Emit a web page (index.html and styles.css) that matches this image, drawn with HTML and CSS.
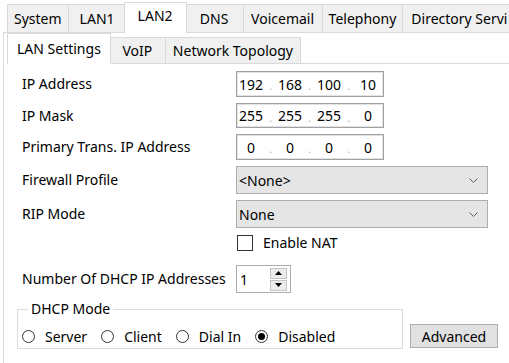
FILE: index.html
```html
<!DOCTYPE html>
<html lang="en">
<head>
    <meta charset="UTF-8">
    <title>LAN2 – LAN Settings</title>
    <link rel="stylesheet" href="styles.css">
</head>
<body>
    <div class="tabctl">
        <div class="tabstrip">
            <div class="tab">System</div>
            <div class="tab">LAN1</div>
            <div class="tab active">LAN2</div>
            <div class="tab">DNS</div>
            <div class="tab wide">Voicemail</div>
            <div class="tab wide">Telephony</div>
            <div class="tab">Directory Servi</div>
        </div>

        <div class="page">
            <div class="tabstrip sub">
                <div class="tab active">LAN Settings</div>
                <div class="tab">VoIP</div>
                <div class="tab">Network Topology</div>
            </div>

            <div class="subpage">
                <div class="form">
                    <label class="lbl">IP Address</label>
                    <div class="ipbox">
                        <span class="oct">192</span><span class="dot">.</span>
                        <span class="oct">168</span><span class="dot">.</span>
                        <span class="oct">100</span><span class="dot">.</span>
                        <span class="oct">10</span>
                    </div>

                    <label class="lbl">IP Mask</label>
                    <div class="ipbox">
                        <span class="oct">255</span><span class="dot">.</span>
                        <span class="oct">255</span><span class="dot">.</span>
                        <span class="oct">255</span><span class="dot">.</span>
                        <span class="oct">0</span>
                    </div>

                    <label class="lbl">Primary Trans. IP Address</label>
                    <div class="ipbox">
                        <span class="oct">0</span><span class="dot">.</span>
                        <span class="oct">0</span><span class="dot">.</span>
                        <span class="oct">0</span><span class="dot">.</span>
                        <span class="oct">0</span>
                    </div>

                    <label class="lbl">Firewall Profile</label>
                    <div class="combo">
                        <span>&lt;None&gt;</span>
                        <svg class="chev" width="9" height="5" viewBox="0 0 9 5"><polyline points="0.5,0.5 4.5,4.5 8.5,0.5" fill="none" stroke="#606060" stroke-width="1"/></svg>
                    </div>

                    <label class="lbl">RIP Mode</label>
                    <div class="combo">
                        <span>None</span>
                        <svg class="chev" width="9" height="5" viewBox="0 0 9 5"><polyline points="0.5,0.5 4.5,4.5 8.5,0.5" fill="none" stroke="#606060" stroke-width="1"/></svg>
                    </div>

                    <span class="lbl"></span>
                    <div class="check">
                        <span class="box"></span>
                        <span>Enable NAT</span>
                    </div>

                    <label class="lbl">Number Of DHCP IP Addresses</label>
                    <div class="spin">
                        <span class="spin-val">1</span>
                        <div class="spin-btns">
                            <span class="spin-btn"><svg width="7" height="4" viewBox="0 0 7 4"><polygon points="0,4 3.5,0 7,4" fill="#000"/></svg></span>
                            <span class="spin-btn"><svg width="7" height="4" viewBox="0 0 7 4"><polygon points="0,0 3.5,4 7,0" fill="#000"/></svg></span>
                        </div>
                    </div>
                </div>

                <div class="dhcp-row">
                    <fieldset class="group">
                        <legend>DHCP Mode</legend>
                        <div class="radios">
                            <span class="opt"><span class="radio"></span>Server</span>
                            <span class="opt"><span class="radio"></span>Client</span>
                            <span class="opt"><span class="radio"></span>Dial In</span>
                            <span class="opt"><span class="radio on"></span>Disabled</span>
                        </div>
                    </fieldset>
                    <button class="btn">Advanced</button>
                </div>
            </div>
        </div>
    </div>
</body>
</html>
```

FILE: styles.css
```css
* {
    margin: 0;
    padding: 0;
    box-sizing: border-box;
}

body {
    font-family: "Noto Sans", "Open Sans", sans-serif;
    font-size: 14px;
    color: #000;
    background: #fff;
    width: 509px;
    height: 363px;
    overflow: hidden;
    white-space: nowrap;
}

/* ---- tab controls ---- */

.tabctl {
    margin-left: 3px;
    width: 506px;
}

.tabstrip {
    display: flex;
    align-items: flex-end;
    height: 32px;
    padding-left: 4px;
}

.tab {
    height: 28px;
    line-height: 27px;
    min-width: 59px;
    padding: 0 6px;
    text-align: center;
    background: #f0f0f0;
    border: 1px solid #d9d9d9;
    border-bottom: none;
    margin-right: -1px;
}

.tab.wide {
    min-width: 80px;
}

.tab:last-child {
    flex: 1;
    text-align: left;
    padding-left: 8px;
    border-right: none;
}

.tab.active {
    position: relative;
    z-index: 1;
    height: 31px;
    line-height: 26px;
    min-width: 63px;
    margin: 0 -2px -1px -2px;
    padding: 0 8px;
    background: #fff;
}

.page {
    border-top: 1px solid #d9d9d9;
    border-left: 1px solid #d9d9d9;
    padding-left: 3px;
    height: 340px;
}

.tabstrip.sub {
    height: 30px;
    padding-left: 2px;
}

.tabstrip.sub .tab {
    flex: none;
    height: 26px;
    line-height: 25px;
    min-width: 57px;
    padding: 0 7px;
    text-align: center;
    border-right: 1px solid #d9d9d9;
}

.tabstrip.sub .tab.active {
    height: 31px;
    line-height: 29px;
    padding: 0 9px;
}

.subpage {
    border-top: 1px solid #d9d9d9;
    padding: 7px 0 0 15px;
}

/* ---- form grid ---- */

.form {
    display: grid;
    grid-template-columns: 214px 1fr;
    grid-template-rows: 26px 25px 26px 28px 28px 25px 28px;
    row-gap: 6px;
    align-items: center;
}

.lbl {
    line-height: 20px;
}

.ipbox {
    display: flex;
    align-items: center;
    width: 148px;
    height: 100%;
    border: 1px solid #a0a0a0;
    box-shadow: inset 0 0 0 1px #e3e3e3;
    background: #fff;
}

.oct {
    width: 28px;
    text-align: center;
}

.dot {
    width: 11px;
    text-align: center;
    color: #a8a8a8;
    font-size: 10px;
    padding-top: 4px;
}

.combo {
    display: flex;
    align-items: center;
    justify-content: space-between;
    width: 252px;
    height: 28px;
    padding: 0 9px 0 2px;
    background: #e5e5e5;
    border: 1px solid #adadad;
}

.check {
    align-self: start;
    display: flex;
    align-items: center;
    gap: 10px;
    padding-left: 1px;
    height: 17px;
}

.box {
    width: 16px;
    height: 16px;
    border: 1px solid #333;
    background: #fff;
}

.spin {
    display: flex;
    align-items: center;
    width: 55px;
    height: 28px;
    border: 1px solid #adadad;
    background: #fff;
}

.spin-val {
    flex: 1;
    padding-left: 3px;
}

.spin-btns {
    display: flex;
    flex-direction: column;
    gap: 1px;
    margin-right: 3px;
}

.spin-btn {
    display: flex;
    align-items: center;
    justify-content: center;
    width: 17px;
    height: 11px;
    background: #ececec;
    border: 1px solid #c4c4c4;
}

/* ---- DHCP mode group ---- */

.dhcp-row {
    display: flex;
    align-items: flex-end;
    gap: 7px;
    margin: 6px 0 0 -5px;
}

.group {
    width: 386px;
    border: 1px solid #dcdcdc;
    padding: 7px 4px 2px 4px;
}

.group legend {
    margin-left: 6px;
    padding: 0 3px;
    line-height: 20px;
}

.radios {
    display: flex;
    align-items: center;
    gap: 14px;
    height: 20px;
}

.opt {
    display: flex;
    align-items: center;
    gap: 10px;
}

.radio {
    display: flex;
    align-items: center;
    justify-content: center;
    width: 13px;
    height: 13px;
    border: 1px solid #333;
    border-radius: 50%;
    background: #fff;
}

.radio.on::after {
    content: "";
    width: 7px;
    height: 7px;
    border-radius: 50%;
    background: #000;
}

.btn {
    font: inherit;
    width: 88px;
    height: 24px;
    margin-bottom: 1px;
    background: #e1e1e1;
    border: 1px solid #adadad;
    color: #000;
}
```
